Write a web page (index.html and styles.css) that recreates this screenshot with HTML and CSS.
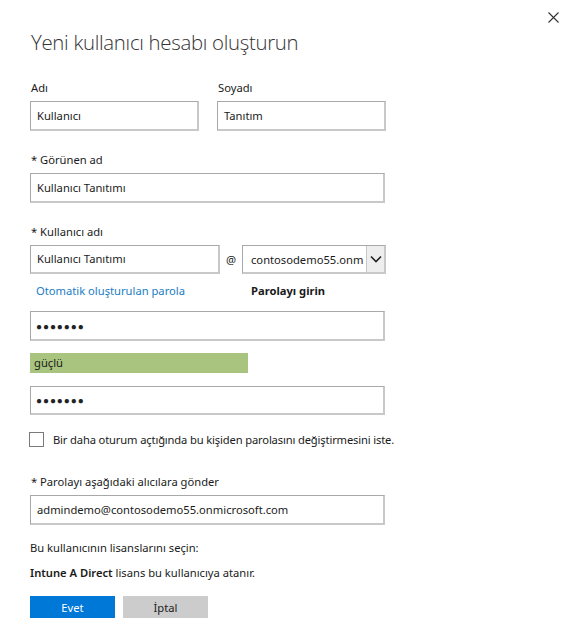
FILE: index.html
```html
<!DOCTYPE html>
<html lang="tr">
<head>
<meta charset="utf-8">
<link rel="stylesheet" href="styles.css">
</head>
<body>
<div class="panel">
  <button class="close" aria-label="Kapat">
    <svg width="11" height="11" viewBox="0 0 11 11"><path d="M0.5 0.5 L10.5 10.5 M10.5 0.5 L0.5 10.5" stroke="#333" stroke-width="1.1" fill="none"/></svg>
  </button>
  <h1 class="title">Yeni kullanıcı hesabı oluşturun</h1>

  <div class="row two">
    <div class="field">
      <div class="label">Adı</div>
      <div class="input half">Kullanıcı</div>
    </div>
    <div class="field">
      <div class="label">Soyadı</div>
      <div class="input half">Tanıtım</div>
    </div>
  </div>

  <div class="label l2">* Görünen ad</div>
  <div class="input full">Kullanıcı Tanıtımı</div>

  <div class="label l2">* Kullanıcı adı</div>
  <div class="row user">
    <div class="input uname">Kullanıcı Tanıtımı</div>
    <span class="at">@</span>
    <div class="select">
      <span class="sel-text">contosodemo55.onm</span>
      <span class="sel-btn"><svg width="12" height="8" viewBox="0 0 12 8"><path d="M1 1.5 L6 6.5 L11 1.5" stroke="#222" stroke-width="1.6" fill="none"/></svg></span>
    </div>
  </div>

  <div class="row tabs">
    <span class="link">Otomatik oluşturulan parola</span>
    <span class="tab-active">Parolayı girin</span>
  </div>

  <div class="input full pwd">●●●●●●●</div>
  <div class="strength">güçlü</div>
  <div class="input full pwd p2">●●●●●●●</div>

  <div class="row check">
    <span class="box"></span>
    <span class="check-text">Bir daha oturum açtığında bu kişiden parolasını değiştirmesini iste.</span>
  </div>

  <div class="label l3">* Parolayı aşağıdaki alıcılara gönder</div>
  <div class="input full">admindemo@contosodemo55.onmicrosoft.com</div>

  <p class="text t1">Bu kullanıcının lisanslarını seçin:</p>
  <p class="text t2"><span class="sb">Intune A Direct</span> lisans bu kullanıcıya atanır.</p>

  <div class="row buttons">
    <button class="btn primary">Evet</button>
    <button class="btn secondary">İptal</button>
  </div>
</div>
</body>
</html>
```

FILE: styles.css
```css
* { box-sizing: border-box; }
html, body { margin: 0; padding: 0; background: #fff; }
body {
  font-family: "Noto Sans", "Open Sans", sans-serif;
  font-size: 11.2px;
  color: #1a1a1a;
  width: 577px;
  height: 631px;
  overflow: hidden;
}
.panel {
  position: relative;
  padding: 28px 0 0 30px;
  display: flex;
  flex-direction: column;
  align-items: flex-start;
}
.close {
  position: absolute;
  top: 11px;
  left: 547px;
  border: 0;
  background: none;
  padding: 0;
  width: 12px;
  height: 12px;
}
.title {
  margin: 0 0 0 1px;
  font-family: "Open Sans", sans-serif;
  font-weight: 300;
  font-size: 20.4px;
  line-height: 28px;
  color: #333;
  letter-spacing: -0.3px;
}
.row { display: flex; align-items: center; }
.two { margin-top: 24px; gap: 18px; }
.field { display: flex; flex-direction: column; }
.label {
  line-height: 16px;
  margin: 0 0 5px 1px;
}
.l2 { margin-top: 21px; }
.l3 { margin-top: 27px; }
.input {
  height: 30px;
  border-width: 1px 2px 2px 1px;
  border-style: solid;
  border-color: #a8a8a8 #c8c8c8 #c8c8c8 #a8a8a8;
  padding: 0 6px;
  display: flex;
  align-items: center;
  line-height: 16px;
  white-space: nowrap;
  overflow: hidden;
}
.half { width: 169px; }
.full { width: 355px; }
.uname { width: 190px; height: 29px; }
.at { width: 22px; text-align: center; }
.select {
  width: 144px;
  height: 29px;
  display: flex;
  border-width: 1px 2px 2px 1px;
  border-style: solid;
  border-color: #a8a8a8 #c8c8c8 #c8c8c8 #a8a8a8;
}
.sel-text {
  flex: 1;
  padding-left: 8px;
  display: flex;
  align-items: center;
  white-space: nowrap;
  overflow: hidden;
}
.sel-btn {
  width: 18px;
  flex: none;
  background: #eeeeee;
  border-left: 1px solid #c8c8c8;
  display: flex;
  align-items: center;
  justify-content: center;
}
.tabs { margin-top: 8px; height: 16px; }
.link { color: #1b7dc4; padding-left: 6px; width: 221px; }
.tab-active { font-weight: 700; }
.pwd {
  margin-top: 13px;
  font-size: 10px;
  letter-spacing: 0.9px;
  color: #222;
  padding-left: 5px;
}
.strength {
  margin-top: 12px;
  width: 218px;
  height: 20px;
  background: #a8c47e;
  padding-left: 4px;
  line-height: 20px;
}
.p2 { margin-top: 13px; height: 29px; }
.check { margin-top: 17px; gap: 9px; }
.check-text { letter-spacing: -0.15px; }
.box {
  width: 15px;
  height: 15px;
  border: 1px solid #7a7a7a;
  background: #fff;
  margin-left: -1px;
}
.text { margin: 0; line-height: 16px; }
.sb { font-weight: 600; }
.t1 { margin-top: 15px; }
.t2 { margin-top: 9px; }
.buttons { margin-top: 15px; gap: 8px; }
.btn {
  width: 85px;
  height: 22px;
  border: 0;
  font-family: inherit;
  font-size: 11.2px;
  padding: 0;
}
.primary { background: #0078d7; color: #fff; }
.secondary { background: #cccccc; color: #222; }
```
